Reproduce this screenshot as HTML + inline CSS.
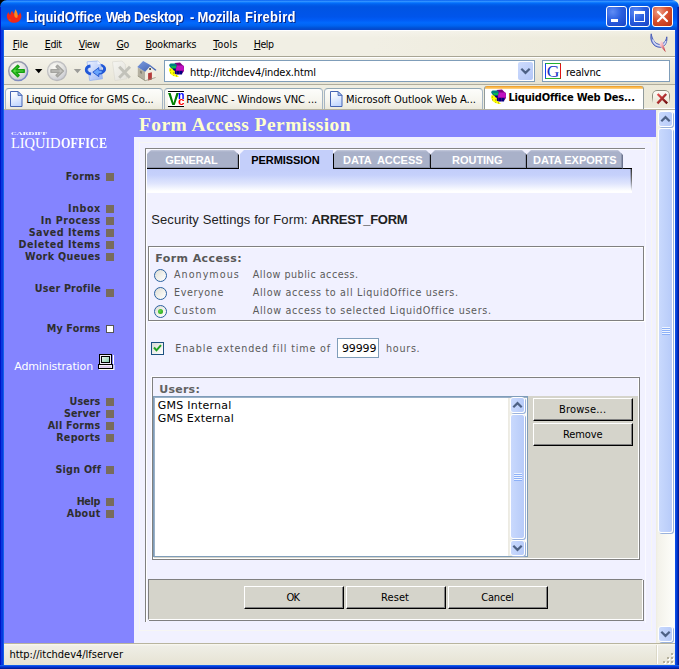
<!DOCTYPE html>
<html><head><meta charset="utf-8"><title>LiquidOffice Web Desktop - Mozilla Firebird</title>
<style>
html,body{margin:0;padding:0;}
body{width:679px;height:669px;position:relative;overflow:hidden;background:#0a3fd6;font-family:"Liberation Sans",sans-serif;}
.a{position:absolute;}
.t{position:absolute;white-space:nowrap;line-height:1;}
.t u{text-decoration:underline;text-underline-offset:1px;}
#title{left:0;top:0;width:679px;height:30px;border-radius:7px 7px 0 0;
 background:linear-gradient(to bottom,#0058ee 0%,#3593ff 4%,#288eff 6%,#127dff 8%,#036ffc 10%,#0262ee 14%,#0057e5 20%,#0054e3 24%,#0055eb 56%,#005bf5 66%,#026afe 76%,#0062ef 86%,#0052d6 93%,#0846c8 100%);}
#lb{left:0;top:30px;width:4px;height:639px;background:linear-gradient(to right,#0014c8 0,#0014c8 1px,#0838e0 1px,#0838e0 3px,#1060e8 3px);}
#rb{left:675px;top:30px;width:4px;height:639px;background:linear-gradient(to right,#0a4ce6 0,#0a4ce6 1px,#0540d8 1px,#0540d8 2px,#0030c0 2px,#0030c0 3px,#001c9c 3px);}
#bb{left:0;top:665px;width:679px;height:4px;background:linear-gradient(to bottom,#1060e8 0,#1060e8 1px,#0838e0 1px,#0838e0 2px,#0030c0 2px,#0030c0 3px,#001c9c 3px);}
#menubar{left:4px;top:30px;width:671px;height:27px;background:linear-gradient(to bottom,#fff 0,#fff 1px,rgba(255,255,255,0.3) 1px,rgba(255,255,255,0) 8px,rgba(255,255,255,0) 26px,#a8a594 26px),linear-gradient(to right,#f1efe4 0,#f1efe4 55%,#ece9d8 100%);}
#toolbar{left:4px;top:57px;width:671px;height:28px;background:linear-gradient(to bottom,#fff 0,#fff 1px,rgba(255,255,255,0.15) 1px,rgba(120,110,60,0.07) 27px,#b0ad9c 27px),linear-gradient(to right,#f1efe4 0,#f1efe4 55%,#ece9d8 100%);}
#tabstrip{left:4px;top:85px;width:671px;height:25px;background:linear-gradient(to bottom,rgba(0,0,0,0) 0,rgba(0,0,0,0) 24px,#b5b29f 24px),linear-gradient(to right,#efede0 0,#efede0 55%,#ece9d8 100%);}
.wb{top:6px;width:21px;height:21px;border-radius:3px;border:1px solid #fff;box-sizing:border-box;}
.wbb{background:radial-gradient(circle at 30% 25%,#5f8cf5 0,#2b5fe0 45%,#1a43c4 100%);}
.wbr{background:radial-gradient(circle at 30% 25%,#f0a088 0,#d8502f 45%,#b83010 100%);}
.btab{top:88px;height:21px;box-sizing:border-box;border:1px solid #a5b5c4;border-top-color:#91a7b4;border-bottom:none;border-radius:4px 4px 0 0;background:linear-gradient(to bottom,#fdfdfb,#f6f5ee 60%,#ebe9dc);}
.pgicon{width:12px;height:15px;}
#sidebar{left:4px;top:110px;width:130px;height:533px;background:#8484ff;}
#header{left:134px;top:110px;width:523px;height:27px;background:#8484ff;}
#panel{left:134px;top:137px;width:523px;height:506px;background:#f1f1ff;}
#vscroll{left:656px;top:110px;width:19px;height:533px;background:linear-gradient(to right,#eeede0 0,#f3f2ea 2px,#fefefb 100%);}
#status{left:4px;top:643px;width:671px;height:22px;background:linear-gradient(to bottom,#b8b49e 0,#b8b49e 1px,#faf9f2 1px,#efeee6 3px,#e6e3d3 100%);}
.sq{left:106px;width:8px;height:8px;background:#786c5c;}
.ftab{top:150px;height:19px;background:linear-gradient(to bottom,#c4cadc 0,#a9b1c9 2px);box-sizing:border-box;border-bottom:1px solid #000;border-right:1px solid #111;box-shadow:inset -1px -1px 0 #8c94ac;clip-path:polygon(4px 0,calc(100% - 5px) 0,100% 5px,100% 100%,0 100%,0 4px);}
.sbtn{background:linear-gradient(to right,#c9d9fd,#b7cbf9);border:1px solid #fff;box-sizing:border-box;border-radius:3px;box-shadow:1px 1px 0 #9ab2dc;}
.grip{width:8px;height:8px;background:repeating-linear-gradient(to bottom,#eef4fe 0,#eef4fe 1px,#8cb0f8 1px,#8cb0f8 2px);}
.btn{background:#d5d4cb;box-sizing:border-box;border:1px solid;border-color:#fff #000 #000 #fff;box-shadow:inset -1px -1px 0 #808080;}
.radio{width:13px;height:13px;border-radius:50%;box-sizing:border-box;border:1.300px solid #2a60a0;background:linear-gradient(135deg,#dcdcd4 0,#f0f0ea 50%,#fff 100%);}
</style></head><body>
<div class="a" style="left:0;top:0;width:10px;height:10px;background:#000"></div><div class="a" style="left:669px;top:0;width:10px;height:10px;background:#efebd8"></div>
<div class="a" id="title"></div>
<div class="a" style="left:677px;top:7px;width:2px;height:23px;background:linear-gradient(to right,#0030c0 0,#0030c0 1px,#001c9c 1px)"></div><div class="a" style="left:0;top:7px;width:1px;height:23px;background:#0014c8"></div>
<div class="a" id="lb"></div><div class="a" id="rb"></div><div class="a" id="bb"></div>
<div class="a" id="menubar"></div>
<div class="a" id="toolbar"></div>
<div class="a" id="tabstrip"></div>
<div class="a" style="left:644px;top:108px;width:31px;height:1px;background:#fff"></div>

<!-- window buttons -->
<div class="a wb wbb" style="left:606px"><div class="a" style="left:4px;top:12px;width:7px;height:3px;background:#fff"></div></div>
<div class="a wb wbb" style="left:629px"><div class="a" style="left:4px;top:4px;width:11px;height:11px;box-sizing:border-box;border:1px solid #fff;border-top-width:3px"></div></div>
<div class="a wb wbr" style="left:652px"><svg class="a" style="left:0;top:0" width="19" height="19"><path d="M5 5L14 14M14 5L5 14" stroke="#fff" stroke-width="2.2" stroke-linecap="round"/></svg></div>

<!-- firebird icon -->
<svg class="a" style="left:5px;top:8px" width="18" height="16" viewBox="5 8 18 16"><path d="M7 17.500c-0.600-2.500 0.500-4 1.500-5.500 0.300 1.500 1 2.300 1.800 3 0-1.800 0.800-3 1.800-4.200 0.500 1.500 1.500 2.500 2.400 3.500l4 1c0.800-1 1.400-2 1.500-3 1 1.500 1.800 3.500 1.200 5.500-0.800 3-3.500 5-7 5s-6.400-2-7.200-5.300z" fill="#f02818"/><path d="M14.500 16.500c-0.800-2.500 0-5 1-7.200 1.500 2 2.800 5 2 8-0.800 1-2.200 0.500-3-0.800z" fill="#ff8a20"/><path d="M9 19l1.500 0.500-0.300 2z" fill="#c87818"/></svg>
<!-- throbber -->
<svg class="a" style="left:649px;top:32px" width="22" height="22" viewBox="649 32 22 22"><defs><linearGradient id="thr2" x1="0" y1="0" x2="1" y2="1"><stop offset="0" stop-color="#fdeef0"/><stop offset="0.400" stop-color="#f4b0b8"/><stop offset="1" stop-color="#b00c14"/></linearGradient></defs>
<path d="M651.200 33.800C649.500 41 653.500 47.300 660 47.300C664.800 47.300 667.600 42.500 666.800 36.800C666 41 663.600 44.400 660 44.400C655.200 44.400 652.200 39.500 651.200 33.800Z" fill="#8c9cdc" stroke="#4256b4" stroke-width="0.900" stroke-linejoin="round"/>
<path d="M652.600 39.500C654 43.500 656.500 45.800 660 45.800C663 45.800 665 43.800 666 41" fill="none" stroke="#d4dcf6" stroke-width="1.300"/>
<path d="M659 42.600c0.800-1.800 3.200-1.600 3.800 0.200l3 9.400-5.600-6z" fill="url(#thr2)"/></svg>

<!-- nav buttons -->
<svg class="a" style="left:5px;top:58px" width="156" height="27" viewBox="5 58 156 27">
 <defs>
  <radialGradient id="gb" cx="0.38" cy="0.30" r="0.80"><stop offset="0" stop-color="#fcfbf6"/><stop offset="0.55" stop-color="#e2e2e0"/><stop offset="1" stop-color="#c2c4d0"/></radialGradient>
  <linearGradient id="ring" x1="0" y1="0" x2="1" y2="1"><stop offset="0" stop-color="#a4a4a8"/><stop offset="0.5" stop-color="#9498b0"/><stop offset="1" stop-color="#6c80d0"/></linearGradient>
  <linearGradient id="ring2" x1="0" y1="0" x2="1" y2="1"><stop offset="0" stop-color="#c8c8c8"/><stop offset="1" stop-color="#b4b4b8"/></linearGradient>
  <linearGradient id="pg" x1="0" y1="0" x2="1" y2="1"><stop offset="0" stop-color="#eef3ff"/><stop offset="0.5" stop-color="#c4d4fa"/><stop offset="1" stop-color="#98b4f2"/></linearGradient>
  <linearGradient id="pgd" x1="0" y1="0" x2="1" y2="1"><stop offset="0" stop-color="#f6f6f2"/><stop offset="1" stop-color="#e2e1da"/></linearGradient>
  <linearGradient id="roof" x1="0" y1="0" x2="1" y2="1"><stop offset="0" stop-color="#7c9ce0"/><stop offset="1" stop-color="#3c5cac"/></linearGradient>
 </defs>
 <circle cx="18.200" cy="71" r="9.500" fill="url(#gb)" stroke="url(#ring)" stroke-width="1.500"/>
 <path d="M11.800 71l5.900-5.600 1.400 1.400-3 2.900H24.200v2.600H16.100l3 2.900-1.400 1.400z" fill="#58dc44" stroke="#14a010" stroke-width="1.500" stroke-linejoin="round"/>
 <path d="M35 69h7.400l-3.700 4.200z" fill="#000"/>
 <circle cx="57" cy="71" r="9.500" fill="url(#gb)" stroke="url(#ring2)" stroke-width="1.300"/>
 <path d="M63.400 71l-5.900-5.600-1.400 1.400 3 2.900H51v2.600H59.100l-3 2.900 1.400 1.400z" fill="#c4c4c0" stroke="#a4a4a0" stroke-width="1.500" stroke-linejoin="round"/>
 <path d="M73.800 69h7.400l-3.700 4.200z" fill="#9c9c98"/>
 <!-- reload -->
 <path d="M97.500 65.200C103 64 106.500 68 103.500 71.500" fill="none" stroke="#2058d8" stroke-width="2.600"/>
 <path d="M87 61.800l10.500-0.800 3.200 3 1.800 14.800-12.800 1.800z" fill="url(#pg)" stroke="#88a8ec" stroke-width="0.600"/>
 <path d="M97.500 61v3.200l3.200-0.200z" fill="#eef3ff"/>
 <path d="M90.500 66C85 66.800 84.500 72.500 91 74.200" fill="none" stroke="#2058d8" stroke-width="2.800"/>
 <path d="M104 68.500C105 72 101.500 73.200 98.500 73.300" fill="none" stroke="#2058d8" stroke-width="2.600"/>
 <path d="M92.800 72.200l6-4.600v2.600l3.500 0.200-0.300 3.200-3.200 0.200v2.800z" fill="#68a4fc" stroke="#1c50cc" stroke-width="0.900" stroke-linejoin="round"/>
 <!-- stop disabled -->
 <path d="M112.500 61.800l9.500-0.800 3.200 3 1.600 14.800-11.800 1.800z" fill="url(#pgd)" stroke="#d8d7cf" stroke-width="0.600"/>
 <path d="M119.200 66.800l10.600 11M130 66.800l-10.800 11" stroke="#c2c2ba" stroke-width="3"/>
 <!-- home -->
 <path d="M137.800 67.500l7.300 4v9.200l-7.300-4.800z" fill="#b4b0a0"/>
 <path d="M145.100 71.500l4.800-6.800 5.700 4.800v8l-10.500 3.200z" fill="#f2eee2"/>
 <path d="M137.300 67l5.800-6 6.800 3.700 6.600 5.200-1.200 0.900-5.400-4.300-4.700 5.200z" fill="url(#roof)"/>
 <path d="M148.100 73.200l3.800-1v7.200l-3.800 1.200z" fill="#b43c3c"/>
 <rect x="149.200" y="68" width="1.800" height="2" fill="#555"/>
 <path d="M140 70.500l2 1v2.500l-2-1z" fill="#8a8678"/>
 <path d="M137.800 76l7.300 4.700 10.500-3.200" fill="none" stroke="#8a8672" stroke-width="0.700"/>
</svg>

<!-- url bar -->
<div class="a" style="left:164px;top:60px;width:371px;height:22px;box-sizing:border-box;border:1px solid #7f9db9;background:#fff"></div>
<div class="a" style="left:518px;top:62px;width:15px;height:18px;background:linear-gradient(135deg,#cddbfd,#b4c7f7);border-radius:2px"></div>
<svg class="a" style="left:520px;top:67px" width="11" height="8"><path d="M1.300 1.700l4.200 4.200 4.200-4.200" fill="none" stroke="#4d6185" stroke-width="2.200"/></svg>
<!-- favicon LO -->
<svg class="a" style="left:167.6px;top:62.4px" width="17" height="16" viewBox="490 88.500 17 16"><defs>
<pattern id="fam" width="2" height="2" patternUnits="userSpaceOnUse"><rect width="2" height="2" fill="#800080"/><rect width="1" height="1" fill="#ff20ff"/><rect x="1" y="1" width="1" height="1" fill="#ff20ff"/></pattern>
<pattern id="fag" width="2" height="2" patternUnits="userSpaceOnUse"><rect width="2" height="2" fill="#008080"/><rect width="1" height="1" fill="#10f020"/><rect x="1" y="1" width="1" height="1" fill="#10f020"/></pattern>
<pattern id="fay" width="3" height="3" patternUnits="userSpaceOnUse"><rect width="3" height="3" fill="#ffff00"/><rect width="1" height="1" fill="#909000"/></pattern>
<pattern id="fan" width="3" height="2" patternUnits="userSpaceOnUse"><rect width="3" height="2" fill="#000080"/><rect width="1" height="1" fill="#800080"/></pattern></defs>
<path d="M496.500 89.500l5.500-0.500 4 4v4.500l-1.500 2h-7.500l-1.500-4.500 2.500-3z" fill="#800080"/>
<path d="M492 93l6 0.500-0.500 3.500-3.500-0.500z" fill="#000080"/>
<path d="M496 97l9 0.500-1 3.500h-6.500l-2.500-2z" fill="url(#fan)"/>
<path d="M498.500 92h7l0.500 5h-8z" fill="url(#fam)"/>
<path d="M491 91.500l1.500-1.500h5l1.500 2-1 2-6-0.500z" fill="#008080"/>
<path d="M493 92.500h5v2.500h-4.500z" fill="url(#fag)"/>
<path d="M491.500 94.500l2.500 0.500 3 3-0.500 2 2.500 1.500 2 2h-2l-3.500-1-3-2-1.500-3.500z" fill="url(#fay)"/>
</svg>
<!-- search box -->
<div class="a" style="left:542px;top:60px;width:128px;height:22px;box-sizing:border-box;border:1px solid #7f9db9;background:#fff"></div>
<div class="a" style="left:545px;top:63px;width:16px;height:16px;box-sizing:border-box;border:1px solid;border-color:#22b032 #e01414 #22b032 #1444f0;background:#fff"></div>
<span class="t" style="left:546.700px;top:62.800px;font-family:'Liberation Serif',serif;font-size:17.500px;color:#1434c4;line-height:1">G</span>

<!-- browser tabs -->
<div class="a btab" style="left:5px;width:158px"></div>
<div class="a btab" style="left:164px;width:159px"></div>
<div class="a btab" style="left:324px;width:159px"></div>
<div class="a" style="left:484px;top:86px;width:160px;height:23px;box-sizing:border-box;border:1px solid #919b9c;border-bottom:none;border-top:none;border-radius:3px 3px 0 0;background:linear-gradient(to bottom,#e89a24 0,#f6ac3c 1px,#ffc868 2px,#ffd68c 3px,#fff 3px)"></div>
<svg class="a" style="left:10px;top:91px" width="13" height="16"><defs><linearGradient id="pi1" x1="0" y1="0" x2="0.300" y2="1"><stop offset="0" stop-color="#ffffff"/><stop offset="0.400" stop-color="#f0f5ff"/><stop offset="1" stop-color="#c4d8ff"/></linearGradient></defs><path d="M0.500 0.500h7.500l4 4v11h-11.500z" fill="url(#pi1)" stroke="#4464b4"/><path d="M8 0.500v4h4z" fill="#a8c0f0" stroke="#4464b4" stroke-width="0.800"/></svg>
<svg class="a" style="left:330px;top:91px" width="13" height="16"><defs><linearGradient id="pi2" x1="0" y1="0" x2="0.300" y2="1"><stop offset="0" stop-color="#ffffff"/><stop offset="0.400" stop-color="#f0f5ff"/><stop offset="1" stop-color="#c4d8ff"/></linearGradient></defs><path d="M0.500 0.500h7.500l4 4v11h-11.500z" fill="url(#pi2)" stroke="#4464b4"/><path d="M8 0.500v4h4z" fill="#a8c0f0" stroke="#4464b4" stroke-width="0.800"/></svg>
<!-- vnc icon -->
<div class="a" style="left:168px;top:91px;width:16px;height:16px;background:#fff;border-top:1px solid #000;border-bottom:1px solid #000;box-sizing:border-box"></div>
<!-- active tab favicon -->
<svg class="a" style="left:490px;top:88.5px" width="17" height="16" viewBox="490 88.500 17 16"><defs>
<pattern id="fbm" width="2" height="2" patternUnits="userSpaceOnUse"><rect width="2" height="2" fill="#800080"/><rect width="1" height="1" fill="#ff20ff"/><rect x="1" y="1" width="1" height="1" fill="#ff20ff"/></pattern>
<pattern id="fbg" width="2" height="2" patternUnits="userSpaceOnUse"><rect width="2" height="2" fill="#008080"/><rect width="1" height="1" fill="#10f020"/><rect x="1" y="1" width="1" height="1" fill="#10f020"/></pattern>
<pattern id="fby" width="3" height="3" patternUnits="userSpaceOnUse"><rect width="3" height="3" fill="#ffff00"/><rect width="1" height="1" fill="#909000"/></pattern>
<pattern id="fbn" width="3" height="2" patternUnits="userSpaceOnUse"><rect width="3" height="2" fill="#000080"/><rect width="1" height="1" fill="#800080"/></pattern></defs>
<path d="M496.500 89.500l5.500-0.500 4 4v4.500l-1.500 2h-7.500l-1.500-4.500 2.500-3z" fill="#800080"/>
<path d="M492 93l6 0.500-0.500 3.500-3.500-0.500z" fill="#000080"/>
<path d="M496 97l9 0.500-1 3.500h-6.500l-2.500-2z" fill="url(#fbn)"/>
<path d="M498.500 92h7l0.500 5h-8z" fill="url(#fbm)"/>
<path d="M491 91.500l1.500-1.500h5l1.500 2-1 2-6-0.500z" fill="#008080"/>
<path d="M493 92.500h5v2.500h-4.500z" fill="url(#fbg)"/>
<path d="M491.500 94.500l2.500 0.500 3 3-0.500 2 2.500 1.500 2 2h-2l-3.500-1-3-2-1.500-3.500z" fill="url(#fby)"/>
</svg>
<!-- tab close -->
<div class="a" style="left:652px;top:90px;width:18px;height:13px;box-sizing:border-box;border:1px solid #8c8c7c;border-bottom:none;border-radius:5px 5px 0 0;background:linear-gradient(to bottom,#fbfaf4,#edeadb);-webkit-mask-image:linear-gradient(to bottom,#000 55%,transparent 100%);mask-image:linear-gradient(to bottom,#000 55%,transparent 100%)"></div>
<svg class="a" style="left:655px;top:92px" width="15" height="14"><defs><linearGradient id="xg" x1="0" y1="0" x2="1" y2="1"><stop offset="0" stop-color="#e85050"/><stop offset="1" stop-color="#6c0c0c"/></linearGradient></defs><path d="M2.600 2l9.600 9.400M11.200 2l-8.800 9.400" stroke="url(#xg)" stroke-width="2.300" fill="none"/></svg>

<!-- page -->
<div class="a" id="sidebar"></div>
<div class="a" id="header"></div>
<div class="a" id="panel"></div>
<div class="a" id="vscroll"></div>
<div class="a" id="status"></div>
<div class="a" style="left:657px;top:645px;width:1px;height:19px;background:#fff"></div>
<div class="a" style="left:656px;top:645px;width:1px;height:19px;background:#dcd9c8"></div>
<svg class="a" style="left:662px;top:652px" width="13" height="13"><g fill="#fff"><rect x="10" y="2" width="2" height="2"/><rect x="6" y="6" width="2" height="2"/><rect x="10" y="6" width="2" height="2"/><rect x="2" y="10" width="2" height="2"/><rect x="6" y="10" width="2" height="2"/><rect x="10" y="10" width="2" height="2"/></g><g fill="#b4b09c"><rect x="9" y="1" width="2" height="2"/><rect x="5" y="5" width="2" height="2"/><rect x="9" y="5" width="2" height="2"/><rect x="1" y="9" width="2" height="2"/><rect x="5" y="9" width="2" height="2"/><rect x="9" y="9" width="2" height="2"/></g></svg>

<!-- main scrollbar -->
<div class="a sbtn" style="left:658px;top:111px;width:15px;height:16px"></div>
<svg class="a" style="left:660px;top:115px" width="11" height="8"><path d="M1.300 6.300l4.200-4.200 4.200 4.200" fill="none" stroke="#4d6185" stroke-width="2.200"/></svg>
<div class="a sbtn" style="left:658px;top:128px;width:15px;height:405px"></div>
<div class="a grip" style="left:662px;top:327px"></div>
<div class="a sbtn" style="left:658px;top:626px;width:15px;height:16px"></div>
<svg class="a" style="left:660px;top:630px" width="11" height="8"><path d="M1.300 1.700l4.200 4.200 4.200-4.200" fill="none" stroke="#4d6185" stroke-width="2.200"/></svg>

<!-- sidebar squares -->
<div class="a sq" style="top:173px"></div>
<div class="a sq" style="top:205px"></div><div class="a sq" style="top:217px"></div><div class="a sq" style="top:229px"></div><div class="a sq" style="top:241px"></div><div class="a sq" style="top:253px"></div>
<div class="a sq" style="top:289px"></div>
<div class="a sq" style="top:325px;background:#fff;box-sizing:border-box;border:1px solid #555"></div>
<div class="a sq" style="top:398px"></div><div class="a sq" style="top:410px"></div><div class="a sq" style="top:422px"></div><div class="a sq" style="top:434px"></div>
<div class="a sq" style="top:466px"></div>
<div class="a sq" style="top:498px"></div><div class="a sq" style="top:510px"></div>
<!-- admin icon -->
<svg class="a" style="left:97px;top:353px" width="19" height="19" viewBox="97 353 19 19"><defs><linearGradient id="scr" x1="0" y1="0" x2="1" y2="1"><stop offset="0" stop-color="#f4fbf8"/><stop offset="1" stop-color="#7cc4a4"/></linearGradient></defs>
<path d="M113.500 355v9.500M114 365v5M99 369.500h15" stroke="#fffff4" stroke-width="1" fill="none"/>
<rect x="99.500" y="354.500" width="12" height="10" fill="#f0e8fc" stroke="#000"/>
<rect x="101.500" y="356.500" width="8" height="6" fill="url(#scr)" stroke="#000"/>
<rect x="98.500" y="364.500" width="14" height="4" fill="#f4eefc" stroke="#000"/>
<path d="M100 367h11" stroke="#c8a8e0" stroke-width="1"/>
</svg>

<!-- form frame lines -->
<div class="a" style="left:139px;top:142px;width:513px;height:489px;box-sizing:border-box;border:1px solid #f6f6f3"></div>
<div class="a" style="left:145px;top:148px;width:1px;height:474px;background:#808080"></div>
<div class="a" style="left:146px;top:149px;width:1px;height:473px;background:#fff"></div>
<div class="a" style="left:145px;top:148px;width:500px;height:1px;background:#858585"></div>
<div class="a" style="left:146px;top:149px;width:499px;height:1px;background:#fbfbff"></div>
<div class="a" style="left:645px;top:149px;width:1px;height:474px;background:#fafaff"></div>
<!-- gradient strip -->
<div class="a" style="left:147px;top:169px;width:485px;height:24px;background:linear-gradient(to bottom,#c2cdfa 0,#c6d1fb 25%,#dfe5fd 60%,#fff 92%);"></div>
<div class="a" style="left:147px;top:168px;width:485px;height:1px;background:#000"></div>
<div class="a" style="left:631px;top:169px;width:1px;height:22px;background:linear-gradient(to bottom,#333,#777 50%,rgba(160,160,160,0))"></div>
<div class="a" style="left:630px;top:169px;width:1px;height:20px;background:linear-gradient(to bottom,rgba(80,80,100,0.5),rgba(160,160,160,0))"></div>
<!-- form tabs -->
<div class="a ftab" style="left:147px;width:92px"></div>
<div class="a" style="left:239px;top:150px;width:94px;height:19px;background:#f4f5ff"></div>
<div class="a" style="left:240px;top:150px;width:93px;height:20px;background:#c4cffa;clip-path:polygon(4px 0,100% 0,100% 100%,0 100%,0 4px)"></div>
<div class="a ftab" style="left:333px;width:98px;border-left:1px solid #000"></div>
<div class="a ftab" style="left:431px;width:96px"></div>
<div class="a ftab" style="left:527px;width:96px;border-right-color:#6c7490"></div>

<!-- form access box -->
<div class="a" style="left:148px;top:246px;width:496px;height:75px;box-sizing:border-box;border:1px solid #808080;box-shadow:inset 1px 1px 0 #fff, 1px 1px 0 #fff"></div>
<div class="a radio" style="left:154px;top:269px"></div>
<div class="a radio" style="left:154px;top:287px"></div>
<div class="a radio" style="left:154px;top:305px"><div class="a" style="left:3px;top:3px;width:5px;height:5px;border-radius:50%;background:radial-gradient(circle at 40% 40%,#5fd84a,#1c9a10)"></div></div>
<!-- checkbox -->
<div class="a" style="left:151px;top:342px;width:13px;height:13px;box-sizing:border-box;border:1px solid #1c5180;background:linear-gradient(135deg,#dcdcd4,#fff)"></div>
<svg class="a" style="left:153px;top:344px" width="9" height="9"><path d="M1 3.500l2.500 2.800L8 1.200" fill="none" stroke="#21a121" stroke-width="2"/></svg>
<!-- hours input -->
<div class="a" style="left:337px;top:338px;width:42px;height:20px;box-sizing:border-box;border:1px solid #7f9db9;background:#fff"></div>

<!-- users box -->
<div class="a" style="left:152px;top:377px;width:488px;height:183px;box-sizing:border-box;border:1px solid #808080;box-shadow:-1px -1px 0 #fcfcff"></div>
<div class="a" style="left:154px;top:396px;width:484px;height:162px;background:#d5d4cb"></div><div class="a" style="left:153px;top:558px;width:486px;height:1px;background:#fff"></div><div class="a" style="left:638px;top:378px;width:1px;height:181px;background:#fff"></div>
<div class="a" style="left:153px;top:396px;width:375px;height:161px;box-sizing:border-box;border:1px solid #7f9db9;background:#fff;box-shadow:inset 1px 1px 0 #9ab0c8"></div>
<div class="a" style="left:508px;top:398px;width:19px;height:158px;background:linear-gradient(to right,#eceae2 0,#f1f0e8 3px,#fefefb 100%)"></div>
<div class="a sbtn" style="left:510px;top:397px;width:15px;height:16px"></div>
<svg class="a" style="left:512px;top:401px" width="11" height="8"><path d="M1.300 6.300l4.200-4.200 4.200 4.200" fill="none" stroke="#4d6185" stroke-width="2.200"/></svg>
<div class="a sbtn" style="left:510px;top:414px;width:15px;height:125px"></div>
<div class="a grip" style="left:514px;top:473px"></div>
<div class="a sbtn" style="left:510px;top:540px;width:15px;height:16px"></div>
<svg class="a" style="left:512px;top:544px" width="11" height="8"><path d="M1.300 1.700l4.200 4.200 4.200-4.200" fill="none" stroke="#4d6185" stroke-width="2.200"/></svg>
<div class="a btn" style="left:533px;top:398px;width:100px;height:23px"></div>
<div class="a btn" style="left:533px;top:423px;width:100px;height:23px"></div>

<!-- bottom button panel -->
<div class="a" style="left:148px;top:579px;width:495px;height:41px;box-sizing:border-box;background:#d5d4cb;border:1px solid;border-color:#808080 #fff #fff #808080;box-shadow:1px 1px 0 #808080"></div>
<div class="a btn" style="left:244px;top:586px;width:100px;height:23px"></div>
<div class="a btn" style="left:346px;top:586px;width:100px;height:23px"></div>
<div class="a btn" style="left:448px;top:586px;width:100px;height:23px"></div>

<span class="t" style="left:26.0px;top:11.0px;font-family:'Liberation Sans',sans-serif;font-size:13px;font-weight:700;color:#fff;letter-spacing:-0.03px;text-shadow:1px 1px 0 #0a2a8a;transform-origin:0 11.00px;transform:scaleY(1.090);">LiquidOffice</span>
<span class="t" style="left:106.0px;top:11.0px;font-family:'Liberation Sans',sans-serif;font-size:13px;font-weight:700;color:#fff;letter-spacing:-1.11px;text-shadow:1px 1px 0 #0a2a8a;transform-origin:0 11.00px;transform:scaleY(1.090);">Web</span>
<span class="t" style="left:134.0px;top:11.0px;font-family:'Liberation Sans',sans-serif;font-size:13px;font-weight:700;color:#fff;letter-spacing:-0.30px;text-shadow:1px 1px 0 #0a2a8a;transform-origin:0 11.00px;transform:scaleY(1.090);">Desktop</span>
<span class="t" style="left:190.0px;top:11.0px;font-family:'Liberation Sans',sans-serif;font-size:13px;font-weight:700;color:#fff;letter-spacing:-0.84px;text-shadow:1px 1px 0 #0a2a8a;transform-origin:0 11.00px;transform:scaleY(1.090);">-</span>
<span class="t" style="left:197.5px;top:11.0px;font-family:'Liberation Sans',sans-serif;font-size:13px;font-weight:700;color:#fff;letter-spacing:-0.14px;text-shadow:1px 1px 0 #0a2a8a;transform-origin:0 11.00px;transform:scaleY(1.090);">Mozilla</span>
<span class="t" style="left:245.0px;top:11.0px;font-family:'Liberation Sans',sans-serif;font-size:13px;font-weight:700;color:#fff;letter-spacing:0.30px;text-shadow:1px 1px 0 #0a2a8a;transform-origin:0 11.00px;transform:scaleY(1.090);">Firebird</span>
<span class="t" style="left:12.7px;top:39.0px;font-family:'DejaVu Sans Condensed','Liberation Sans',sans-serif;font-size:10.5px;font-weight:400;color:#000;letter-spacing:-0.15px;"><u>F</u>ile</span>
<span class="t" style="left:44.8px;top:39.0px;font-family:'DejaVu Sans Condensed','Liberation Sans',sans-serif;font-size:10.5px;font-weight:400;color:#000;letter-spacing:-0.37px;"><u>E</u>dit</span>
<span class="t" style="left:78.8px;top:39.0px;font-family:'DejaVu Sans Condensed','Liberation Sans',sans-serif;font-size:10.5px;font-weight:400;color:#000;letter-spacing:-0.40px;"><u>V</u>iew</span>
<span class="t" style="left:116.4px;top:39.0px;font-family:'DejaVu Sans Condensed','Liberation Sans',sans-serif;font-size:10.5px;font-weight:400;color:#000;letter-spacing:-0.11px;"><u>G</u>o</span>
<span class="t" style="left:145.6px;top:39.0px;font-family:'DejaVu Sans Condensed','Liberation Sans',sans-serif;font-size:10.5px;font-weight:400;color:#000;letter-spacing:-0.25px;"><u>B</u>ookmarks</span>
<span class="t" style="left:213.2px;top:39.0px;font-family:'DejaVu Sans Condensed','Liberation Sans',sans-serif;font-size:10.5px;font-weight:400;color:#000;letter-spacing:0.28px;"><u>T</u>ools</span>
<span class="t" style="left:253.8px;top:39.0px;font-family:'DejaVu Sans Condensed','Liberation Sans',sans-serif;font-size:10.5px;font-weight:400;color:#000;letter-spacing:-0.45px;"><u>H</u>elp</span>
<span class="t" style="left:190.0px;top:66.5px;font-family:'DejaVu Sans Condensed','Liberation Sans',sans-serif;font-size:11px;font-weight:400;color:#000;letter-spacing:-0.13px;">http://itchdev4/index.html</span>
<span class="t" style="left:566.0px;top:66.5px;font-family:'DejaVu Sans Condensed','Liberation Sans',sans-serif;font-size:11px;font-weight:400;color:#000;letter-spacing:-0.22px;">realvnc</span>
<span class="t" style="left:26.3px;top:93.5px;font-family:'DejaVu Sans Condensed','Liberation Sans',sans-serif;font-size:11px;font-weight:400;color:#000;letter-spacing:-0.09px;">Liquid Office for GMS Co...</span>
<span class="t" style="left:186.3px;top:93.5px;font-family:'DejaVu Sans Condensed','Liberation Sans',sans-serif;font-size:11px;font-weight:400;color:#000;letter-spacing:-0.10px;">RealVNC - Windows VNC ...</span>
<span class="t" style="left:346.0px;top:93.5px;font-family:'DejaVu Sans Condensed','Liberation Sans',sans-serif;font-size:11px;font-weight:400;color:#000;letter-spacing:-0.02px;">Microsoft Outlook Web A...</span>
<span class="t" style="left:508.5px;top:92.3px;font-family:'DejaVu Sans Condensed','Liberation Sans',sans-serif;font-size:11px;font-weight:700;color:#000;letter-spacing:-0.19px;">LiquidOffice Web Des...</span>
<span class="t" style="left:9.4px;top:648.5px;font-family:'DejaVu Sans Condensed','Liberation Sans',sans-serif;font-size:11px;font-weight:400;color:#000;letter-spacing:-0.02px;">http://itchdev4/lfserver</span>
<span class="t" style="left:139.0px;top:114.6px;font-family:'Liberation Serif',serif;font-size:19.5px;font-weight:700;color:#ffffcc;letter-spacing:0.43px;">Form Access Permission</span>
<span class="t" style="left:11.0px;top:131.4px;font-family:'Liberation Serif',serif;font-size:5px;font-weight:700;color:#fff;transform-origin:0 0;transform:scaleX(1.622);">CARDIFF</span>
<span class="t" style="left:11.0px;top:135.6px;font-family:'Liberation Serif',serif;font-size:14.5px;font-weight:400;color:#fff;letter-spacing:-0.09px;">LIQUID</span>
<span class="t" style="left:61.0px;top:135.6px;font-family:'Liberation Serif',serif;font-size:14.5px;font-weight:700;color:#fff;transform-origin:0 0;transform:scaleX(0.840);">OFFICE</span>
<span class="t" style="left:65.8px;top:172.0px;font-family:'DejaVu Sans','Liberation Sans',sans-serif;font-size:9.6px;font-weight:700;color:#2e2e2e;letter-spacing:0.32px;">Forms</span>
<span class="t" style="left:68.0px;top:204.0px;font-family:'DejaVu Sans','Liberation Sans',sans-serif;font-size:9.6px;font-weight:700;color:#2e2e2e;letter-spacing:0.56px;">Inbox</span>
<span class="t" style="left:40.8px;top:216.0px;font-family:'DejaVu Sans','Liberation Sans',sans-serif;font-size:9.6px;font-weight:700;color:#2e2e2e;letter-spacing:0.42px;">In Process</span>
<span class="t" style="left:28.7px;top:228.0px;font-family:'DejaVu Sans','Liberation Sans',sans-serif;font-size:9.6px;font-weight:700;color:#2e2e2e;letter-spacing:0.49px;">Saved Items</span>
<span class="t" style="left:18.6px;top:240.0px;font-family:'DejaVu Sans','Liberation Sans',sans-serif;font-size:9.6px;font-weight:700;color:#2e2e2e;letter-spacing:0.48px;">Deleted Items</span>
<span class="t" style="left:25.1px;top:252.0px;font-family:'DejaVu Sans','Liberation Sans',sans-serif;font-size:9.6px;font-weight:700;color:#2e2e2e;letter-spacing:0.34px;">Work Queues</span>
<span class="t" style="left:34.8px;top:284.0px;font-family:'DejaVu Sans','Liberation Sans',sans-serif;font-size:9.6px;font-weight:700;color:#2e2e2e;letter-spacing:0.20px;">User Profile</span>
<span class="t" style="left:46.7px;top:324.0px;font-family:'DejaVu Sans','Liberation Sans',sans-serif;font-size:9.6px;font-weight:700;color:#2e2e2e;letter-spacing:0.18px;">My Forms</span>
<span class="t" style="left:69.6px;top:397.0px;font-family:'DejaVu Sans','Liberation Sans',sans-serif;font-size:9.6px;font-weight:700;color:#2e2e2e;letter-spacing:0.06px;">Users</span>
<span class="t" style="left:63.9px;top:409.0px;font-family:'DejaVu Sans','Liberation Sans',sans-serif;font-size:9.6px;font-weight:700;color:#2e2e2e;letter-spacing:0.15px;">Server</span>
<span class="t" style="left:47.7px;top:421.0px;font-family:'DejaVu Sans','Liberation Sans',sans-serif;font-size:9.6px;font-weight:700;color:#2e2e2e;letter-spacing:0.26px;">All Forms</span>
<span class="t" style="left:56.2px;top:433.0px;font-family:'DejaVu Sans','Liberation Sans',sans-serif;font-size:9.6px;font-weight:700;color:#2e2e2e;letter-spacing:0.28px;">Reports</span>
<span class="t" style="left:55.4px;top:465.0px;font-family:'DejaVu Sans','Liberation Sans',sans-serif;font-size:9.6px;font-weight:700;color:#2e2e2e;letter-spacing:0.25px;">Sign Off</span>
<span class="t" style="left:76.7px;top:497.0px;font-family:'DejaVu Sans','Liberation Sans',sans-serif;font-size:9.6px;font-weight:700;color:#2e2e2e;letter-spacing:-0.37px;">Help</span>
<span class="t" style="left:66.7px;top:509.0px;font-family:'DejaVu Sans','Liberation Sans',sans-serif;font-size:9.6px;font-weight:700;color:#2e2e2e;letter-spacing:0.32px;">About</span>
<span class="t" style="left:14.2px;top:360.5px;font-family:'DejaVu Sans','Liberation Sans',sans-serif;font-size:11px;font-weight:400;color:#fff;letter-spacing:-0.12px;">Administration</span>
<span class="t" style="left:165.3px;top:155.0px;font-family:'Liberation Sans',sans-serif;font-size:11px;font-weight:700;color:#fff;letter-spacing:-0.21px;white-space:pre;">GENERAL</span>
<span class="t" style="left:251.3px;top:155.0px;font-family:'Liberation Sans',sans-serif;font-size:11px;font-weight:700;color:#000;letter-spacing:-0.08px;white-space:pre;">PERMISSION</span>
<span class="t" style="left:343.0px;top:155.0px;font-family:'Liberation Sans',sans-serif;font-size:11px;font-weight:700;color:#fff;letter-spacing:-0.05px;white-space:pre;">DATA  ACCESS</span>
<span class="t" style="left:452.0px;top:155.0px;font-family:'Liberation Sans',sans-serif;font-size:11px;font-weight:700;color:#fff;letter-spacing:-0.02px;white-space:pre;">ROUTING</span>
<span class="t" style="left:533.0px;top:155.0px;font-family:'Liberation Sans',sans-serif;font-size:11px;font-weight:700;color:#fff;letter-spacing:-0.05px;white-space:pre;">DATA EXPORTS</span>
<span class="t" style="left:151.2px;top:213.0px;font-family:'Liberation Sans',sans-serif;font-size:13px;font-weight:400;color:#222;letter-spacing:0.10px;white-space:pre;">Security Settings for Form: </span>
<span class="t" style="left:311.4px;top:213.0px;font-family:'Liberation Sans',sans-serif;font-size:13px;font-weight:700;color:#222;letter-spacing:-0.27px;">ARREST_FORM</span>
<span class="t" style="left:155.3px;top:252.5px;font-family:'DejaVu Sans','Liberation Sans',sans-serif;font-size:11px;font-weight:700;color:#585858;letter-spacing:0.40px;">Form Access:</span>
<span class="t" style="left:174.0px;top:270.0px;font-family:'DejaVu Sans','Liberation Sans',sans-serif;font-size:9.6px;font-weight:400;color:#5a5a5a;letter-spacing:1.02px;">Anonymous</span>
<span class="t" style="left:174.0px;top:288.0px;font-family:'DejaVu Sans','Liberation Sans',sans-serif;font-size:9.6px;font-weight:400;color:#5a5a5a;letter-spacing:0.61px;">Everyone</span>
<span class="t" style="left:174.0px;top:306.0px;font-family:'DejaVu Sans','Liberation Sans',sans-serif;font-size:9.6px;font-weight:400;color:#5a5a5a;letter-spacing:1.05px;">Custom</span>
<span class="t" style="left:252.8px;top:270.0px;font-family:'DejaVu Sans','Liberation Sans',sans-serif;font-size:9.6px;font-weight:400;color:#5a5a5a;letter-spacing:0.49px;">Allow public access.</span>
<span class="t" style="left:252.8px;top:288.0px;font-family:'DejaVu Sans','Liberation Sans',sans-serif;font-size:9.6px;font-weight:400;color:#5a5a5a;letter-spacing:0.66px;">Allow access to all LiquidOffice users.</span>
<span class="t" style="left:252.8px;top:306.0px;font-family:'DejaVu Sans','Liberation Sans',sans-serif;font-size:9.6px;font-weight:400;color:#5a5a5a;letter-spacing:0.67px;">Allow access to selected LiquidOffice users.</span>
<span class="t" style="left:175.3px;top:344.0px;font-family:'DejaVu Sans','Liberation Sans',sans-serif;font-size:9.6px;font-weight:400;color:#5a5a5a;letter-spacing:0.83px;">Enable extended fill time of</span>
<span class="t" style="left:342.0px;top:343.0px;font-family:'DejaVu Sans','Liberation Sans',sans-serif;font-size:11px;font-weight:400;color:#000;letter-spacing:-0.15px;">99999</span>
<span class="t" style="left:386.0px;top:344.0px;font-family:'DejaVu Sans','Liberation Sans',sans-serif;font-size:9.6px;font-weight:400;color:#5a5a5a;letter-spacing:0.73px;">hours.</span>
<span class="t" style="left:159.3px;top:383.5px;font-family:'DejaVu Sans','Liberation Sans',sans-serif;font-size:11px;font-weight:700;color:#626262;letter-spacing:0.24px;">Users:</span>
<span class="t" style="left:157.7px;top:399.5px;font-family:'DejaVu Sans','Liberation Sans',sans-serif;font-size:11px;font-weight:400;color:#000;letter-spacing:0.25px;">GMS Internal</span>
<span class="t" style="left:157.7px;top:412.5px;font-family:'DejaVu Sans','Liberation Sans',sans-serif;font-size:11px;font-weight:400;color:#000;letter-spacing:0.17px;">GMS External</span>
<span class="t" style="left:559.0px;top:403.5px;font-family:'DejaVu Sans Condensed','Liberation Sans',sans-serif;font-size:11px;font-weight:400;color:#000;letter-spacing:0.20px;">Browse...</span>
<span class="t" style="left:563.0px;top:428.5px;font-family:'DejaVu Sans Condensed','Liberation Sans',sans-serif;font-size:11px;font-weight:400;color:#000;letter-spacing:-0.12px;">Remove</span>
<span class="t" style="left:286.6px;top:591.8px;font-family:'DejaVu Sans Condensed','Liberation Sans',sans-serif;font-size:11px;font-weight:400;color:#000;letter-spacing:-0.88px;">OK</span>
<span class="t" style="left:381.0px;top:591.8px;font-family:'DejaVu Sans Condensed','Liberation Sans',sans-serif;font-size:11px;font-weight:400;color:#000;letter-spacing:0.10px;">Reset</span>
<span class="t" style="left:481.3px;top:591.8px;font-family:'DejaVu Sans Condensed','Liberation Sans',sans-serif;font-size:11px;font-weight:400;color:#000;letter-spacing:-0.21px;">Cancel</span>
<span class="t" style="left:167.6px;top:90.8px;font-family:'Liberation Sans',sans-serif;font-size:17px;font-weight:700;color:#008000;transform-origin:0 0;transform:scaleX(0.970);">V</span>
<span class="t" style="left:177.8px;top:89.6px;font-family:'Liberation Sans',sans-serif;font-size:11px;font-weight:700;color:#0000ff;transform-origin:0 0;transform:scaleX(0.965);">n</span>
<span class="t" style="left:177.8px;top:95.6px;font-family:'Liberation Sans',sans-serif;font-size:11px;font-weight:700;color:#ff0000;transform-origin:0 0;transform:scaleX(1.061);">c</span>
</body></html>
